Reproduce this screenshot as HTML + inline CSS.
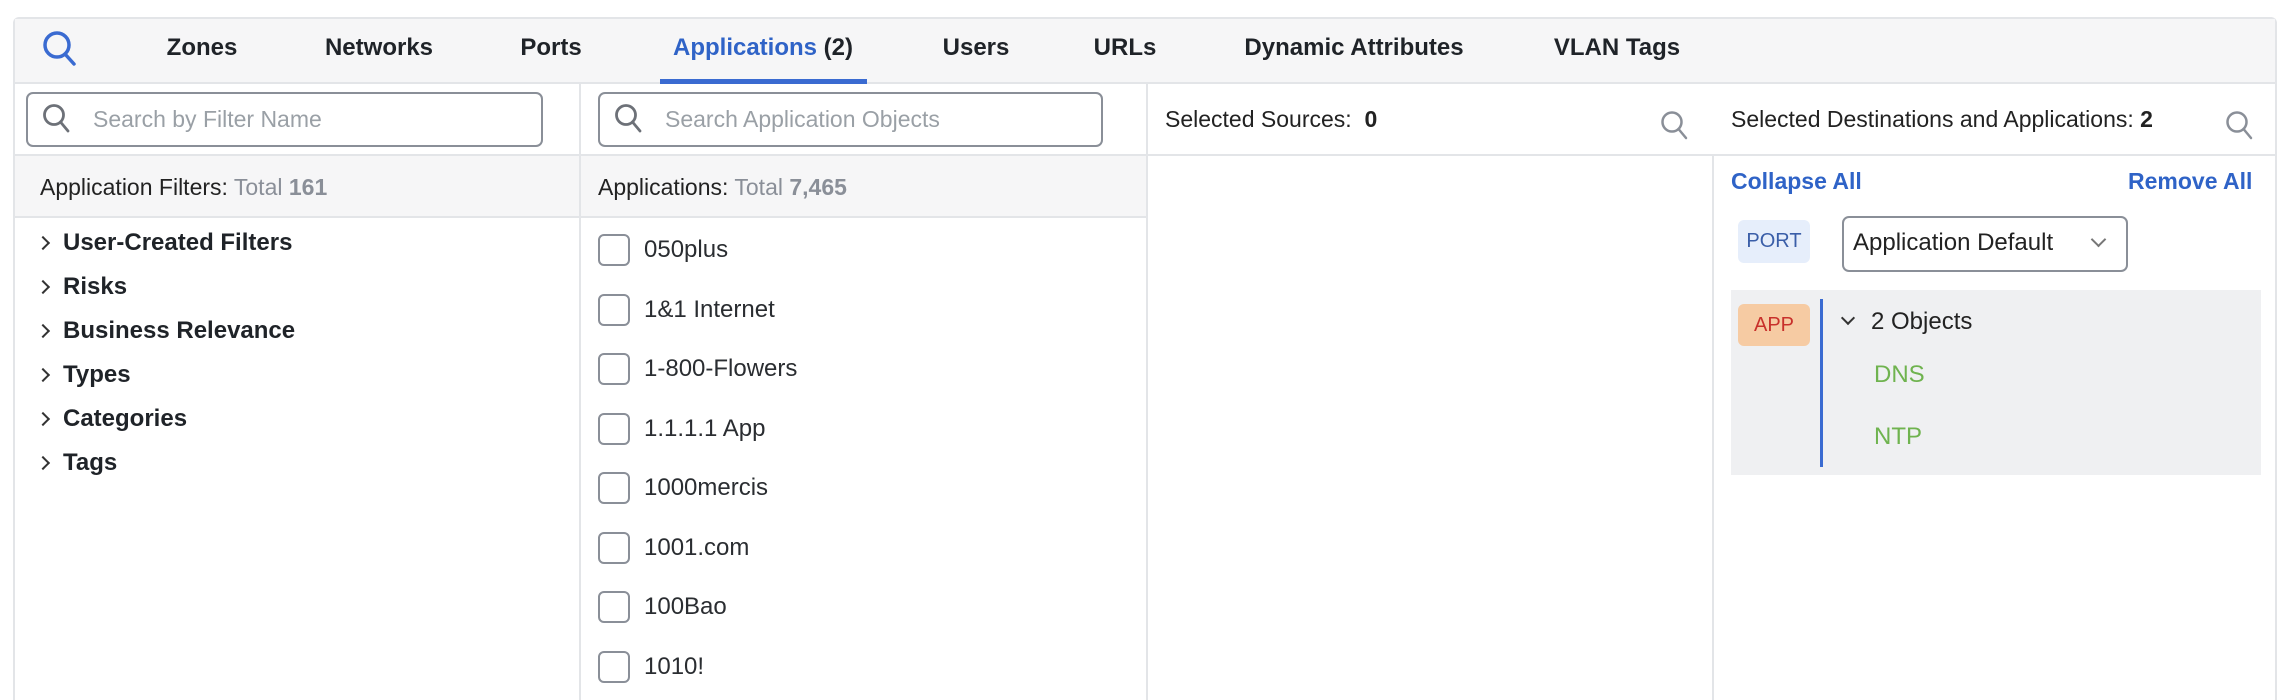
<!DOCTYPE html>
<html><head><meta charset="utf-8"><style>
*{box-sizing:border-box;margin:0;padding:0}
html,body{width:2292px;height:700px;overflow:hidden}
body{background:#fff;font-family:"Liberation Sans",sans-serif;color:#222;position:relative}
.a{position:absolute;white-space:nowrap}
.tab{position:absolute;top:34px;font-size:24px;font-weight:bold;color:#1f2328;transform:translateX(-50%)}
.sb{position:absolute;border:2.5px solid #8a8f98;border-radius:7px;background:#fff}
.ph{font-size:23px;color:#9aa0a6}
.fi{font-size:24px;font-weight:bold;color:#1f2328}
.ap{font-size:24px;color:#2a2d31}
.cb{position:absolute;left:598px;width:32px;height:32px;border:2.5px solid #8a8f98;border-radius:6px;background:#fff}
.chev{position:absolute;left:38px;width:10px;height:10px;border-right:2px solid #333;border-top:2px solid #333;transform:rotate(45deg)}
</style></head><body>
<div class="a" style="left:13px;top:17px;width:2264px;height:683px;border:2px solid #e3e5e8;border-bottom:none;border-radius:6px 6px 0 0"></div>
<div class="a" style="left:15px;top:19px;width:2260px;height:65px;background:#f6f6f7;border-bottom:2px solid #e3e5e8"></div>
<svg class="a" style="left:42px;top:30px" width="36" height="38" viewBox="0 0 36 38"><circle cx="15" cy="15" r="12" fill="none" stroke="#3a6bd1" stroke-width="3.5"/><line x1="23" y1="24" x2="32" y2="34" stroke="#3a6bd1" stroke-width="3.5" stroke-linecap="round"/></svg>
<div class="tab" style="left:202px">Zones</div>
<div class="tab" style="left:379px">Networks</div>
<div class="tab" style="left:551px">Ports</div>
<div class="tab" style="left:763px"><span style="color:#2f63c7">Applications</span> (2)</div>
<div class="tab" style="left:976px">Users</div>
<div class="tab" style="left:1125px">URLs</div>
<div class="tab" style="left:1354px">Dynamic Attributes</div>
<div class="tab" style="left:1617px">VLAN Tags</div>
<div class="a" style="left:660px;top:79px;width:207px;height:5px;background:#3a6bd1"></div>
<div class="a" style="left:579px;top:84px;width:2px;height:620px;background:#e3e5e8"></div>
<div class="a" style="left:1146px;top:84px;width:2px;height:620px;background:#e3e5e8"></div>
<div class="a" style="left:1712px;top:155px;width:2px;height:550px;background:#e3e5e8"></div>
<div class="a" style="left:15px;top:154px;width:2260px;height:2px;background:#e3e5e8"></div>
<div class="a" style="left:15px;top:156px;width:564px;height:62px;background:#f6f6f7;border-bottom:2px solid #e3e5e8"></div>
<div class="a" style="left:581px;top:156px;width:565px;height:62px;background:#f6f6f7;border-bottom:2px solid #e3e5e8"></div>
<div class="sb" style="left:26px;top:92px;width:517px;height:55px"></div>
<svg class="a" style="left:42px;top:103px" width="30" height="32" viewBox="0 0 30 32"><circle cx="12" cy="12" r="9.5" fill="none" stroke="#6d7178" stroke-width="2.8"/><line x1="18.5" y1="19" x2="26" y2="28" stroke="#6d7178" stroke-width="2.8" stroke-linecap="round"/></svg>
<div class="a ph" style="left:93px;top:106px">Search by Filter Name</div>
<div class="sb" style="left:598px;top:92px;width:505px;height:55px"></div>
<svg class="a" style="left:614px;top:103px" width="30" height="32" viewBox="0 0 30 32"><circle cx="12" cy="12" r="9.5" fill="none" stroke="#6d7178" stroke-width="2.8"/><line x1="18.5" y1="19" x2="26" y2="28" stroke="#6d7178" stroke-width="2.8" stroke-linecap="round"/></svg>
<div class="a ph" style="left:665px;top:106px">Search Application Objects</div>
<div class="a" style="left:1165px;top:106px;font-size:23px">Selected Sources:&nbsp; <b>0</b></div>
<svg class="a" style="left:1660px;top:110px" width="30" height="32" viewBox="0 0 30 32"><circle cx="12" cy="12" r="9.5" fill="none" stroke="#8a8f98" stroke-width="2.5"/><line x1="18.5" y1="19" x2="26" y2="28" stroke="#8a8f98" stroke-width="2.5" stroke-linecap="round"/></svg>
<div class="a" style="left:1731px;top:106px;font-size:23px">Selected Destinations and Applications: <b>2</b></div>
<svg class="a" style="left:2225px;top:110px" width="30" height="32" viewBox="0 0 30 32"><circle cx="12" cy="12" r="9.5" fill="none" stroke="#8a8f98" stroke-width="2.5"/><line x1="18.5" y1="19" x2="26" y2="28" stroke="#8a8f98" stroke-width="2.5" stroke-linecap="round"/></svg>
<div class="a" style="left:40px;top:174px;font-size:23px">Application Filters: <span style="color:#8a8f98">Total <b>161</b></span></div>
<div class="a" style="left:598px;top:174px;font-size:23px">Applications: <span style="color:#8a8f98">Total <b>7,465</b></span></div>
<div class="chev" style="top:238px"></div><div class="a fi" style="left:63px;top:229px">User-Created Filters</div>
<div class="chev" style="top:282px"></div><div class="a fi" style="left:63px;top:273px">Risks</div>
<div class="chev" style="top:326px"></div><div class="a fi" style="left:63px;top:317px">Business Relevance</div>
<div class="chev" style="top:370px"></div><div class="a fi" style="left:63px;top:361px">Types</div>
<div class="chev" style="top:414px"></div><div class="a fi" style="left:63px;top:405px">Categories</div>
<div class="chev" style="top:458px"></div><div class="a fi" style="left:63px;top:449px">Tags</div>
<div class="cb" style="top:234px"></div><div class="a ap" style="left:644px;top:236px">050plus</div>
<div class="cb" style="top:294px"></div><div class="a ap" style="left:644px;top:296px">1&amp;1 Internet</div>
<div class="cb" style="top:353px"></div><div class="a ap" style="left:644px;top:355px">1-800-Flowers</div>
<div class="cb" style="top:413px"></div><div class="a ap" style="left:644px;top:415px">1.1.1.1 App</div>
<div class="cb" style="top:472px"></div><div class="a ap" style="left:644px;top:474px">1000mercis</div>
<div class="cb" style="top:532px"></div><div class="a ap" style="left:644px;top:534px">1001.com</div>
<div class="cb" style="top:591px"></div><div class="a ap" style="left:644px;top:593px">100Bao</div>
<div class="cb" style="top:651px"></div><div class="a ap" style="left:644px;top:653px">1010!</div>
<div class="a" style="left:1731px;top:168px;font-size:23px;font-weight:bold;color:#2f63c7">Collapse All</div>
<div class="a" style="left:2128px;top:168px;font-size:23px;font-weight:bold;color:#2f63c7">Remove All</div>
<div class="a" style="left:1738px;top:220px;width:72px;height:43px;background:#e6eefb;border-radius:6px;color:#3a5ea8;font-size:20px;text-align:center;line-height:43px">PORT</div>
<div class="sb" style="left:1842px;top:216px;width:286px;height:56px"></div>
<div class="a" style="left:1853px;top:229px;font-size:24px;color:#222">Application Default</div>
<div class="a" style="left:2093px;top:234px;width:11px;height:11px;border-right:2.5px solid #777;border-bottom:2.5px solid #777;transform:rotate(45deg)"></div>
<div class="a" style="left:1731px;top:290px;width:530px;height:185px;background:#eff0f2"></div>
<div class="a" style="left:1738px;top:304px;width:72px;height:42px;background:#f6cba3;border-radius:6px;color:#c8302b;font-size:20px;text-align:center;line-height:42px">APP</div>
<div class="a" style="left:1820px;top:299px;width:3px;height:168px;background:#3a6bd1"></div>
<div class="a" style="left:1843px;top:313px;width:10px;height:10px;border-right:2.5px solid #333;border-bottom:2.5px solid #333;transform:rotate(45deg)"></div>
<div class="a" style="left:1871px;top:308px;font-size:24px;color:#222">2 Objects</div>
<div class="a" style="left:1874px;top:361px;font-size:24px;color:#6fb34f">DNS</div>
<div class="a" style="left:1874px;top:423px;font-size:24px;color:#6fb34f">NTP</div>
</body></html>
